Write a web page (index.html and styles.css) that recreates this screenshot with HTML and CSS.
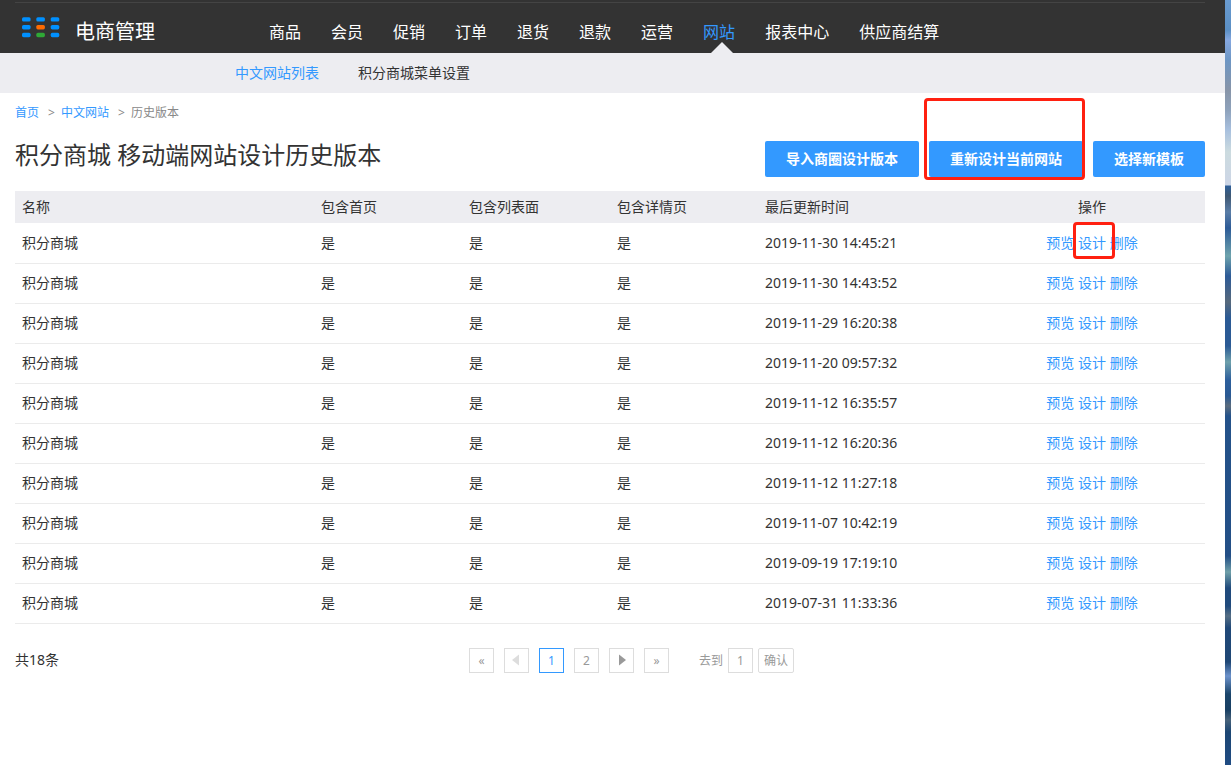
FILE: index.html
```html
<!DOCTYPE html>
<html lang="zh-CN">
<head>
  <meta charset="UTF-8">
  <title>历史版本 - 电商管理</title>
  <link rel="stylesheet" href="styles.css">
</head>
<body>
  <div class="page">
    <header class="header">
      <div class="header-inner">
        <div class="brand">
          <svg class="logo" width="38" height="22" viewBox="0 0 38 22" aria-hidden="true">
            <g fill="#0090ff">
              <rect x="0" y="0.2" width="8.6" height="4.4" rx="1.6"/>
              <rect x="14.3" y="0.2" width="8.6" height="4.4" rx="1.6"/>
              <rect x="28.7" y="0.2" width="8.6" height="4.4" rx="1.6"/>
              <rect x="0" y="8" width="8.6" height="4.4" rx="1.6"/>
              <rect x="28.7" y="8" width="8.6" height="4.4" rx="1.6"/>
              <rect x="0" y="15.8" width="8.6" height="4.4" rx="1.6"/>
              <rect x="28.7" y="15.8" width="8.6" height="4.4" rx="1.6"/>
            </g>
            <rect x="14.3" y="8" width="8.6" height="4.4" rx="1.6" fill="#ff6a00"/>
            <rect x="14.3" y="15.8" width="8.6" height="4.4" rx="1.6" fill="#2fa836"/>
          </svg>
          <span class="brand-name">电商管理</span>
        </div>
        <nav class="nav">
          <a href="#">商品</a>
          <a href="#">会员</a>
          <a href="#">促销</a>
          <a href="#">订单</a>
          <a href="#">退货</a>
          <a href="#">退款</a>
          <a href="#">运营</a>
          <a href="#" class="active">网站</a>
          <a href="#">报表中心</a>
          <a href="#">供应商结算</a>
        </nav>
      </div>
    </header>

    <nav class="subnav">
      <a href="#" class="active">中文网站列表</a>
      <a href="#">积分商城菜单设置</a>
    </nav>

    <main class="content">
      <div class="breadcrumb">
        <a href="#">首页</a>
        <span class="sep">&gt;</span>
        <a href="#">中文网站</a>
        <span class="sep">&gt;</span>
        <span>历史版本</span>
      </div>

      <div class="title-bar">
        <h1>积分商城 移动端网站设计历史版本</h1>
        <div class="actions">
          <button type="button" class="btn">导入商圈设计版本</button>
          <div class="marked marked-btn">
            <button type="button" class="btn">重新设计当前网站</button>
          </div>
          <button type="button" class="btn">选择新模板</button>
        </div>
      </div>

      <table class="list">
        <colgroup>
          <col>
          <col class="col-flag">
          <col class="col-flag">
          <col class="col-flag">
          <col class="col-time">
          <col class="col-ops">
        </colgroup>
        <thead>
          <tr>
            <th>名称</th>
            <th>包含首页</th>
            <th>包含列表面</th>
            <th>包含详情页</th>
            <th>最后更新时间</th>
            <th class="ops">操作</th>
          </tr>
        </thead>
        <tbody>
          <tr>
            <td>积分商城</td><td>是</td><td>是</td><td>是</td><td>2019-11-30 14:45:21</td>
            <td class="ops"><a href="#">预览</a> <span class="marked marked-link"><a href="#">设计</a></span> <a href="#">删除</a></td>
          </tr>
          <tr>
            <td>积分商城</td><td>是</td><td>是</td><td>是</td><td>2019-11-30 14:43:52</td>
            <td class="ops"><a href="#">预览</a> <a href="#">设计</a> <a href="#">删除</a></td>
          </tr>
          <tr>
            <td>积分商城</td><td>是</td><td>是</td><td>是</td><td>2019-11-29 16:20:38</td>
            <td class="ops"><a href="#">预览</a> <a href="#">设计</a> <a href="#">删除</a></td>
          </tr>
          <tr>
            <td>积分商城</td><td>是</td><td>是</td><td>是</td><td>2019-11-20 09:57:32</td>
            <td class="ops"><a href="#">预览</a> <a href="#">设计</a> <a href="#">删除</a></td>
          </tr>
          <tr>
            <td>积分商城</td><td>是</td><td>是</td><td>是</td><td>2019-11-12 16:35:57</td>
            <td class="ops"><a href="#">预览</a> <a href="#">设计</a> <a href="#">删除</a></td>
          </tr>
          <tr>
            <td>积分商城</td><td>是</td><td>是</td><td>是</td><td>2019-11-12 16:20:36</td>
            <td class="ops"><a href="#">预览</a> <a href="#">设计</a> <a href="#">删除</a></td>
          </tr>
          <tr>
            <td>积分商城</td><td>是</td><td>是</td><td>是</td><td>2019-11-12 11:27:18</td>
            <td class="ops"><a href="#">预览</a> <a href="#">设计</a> <a href="#">删除</a></td>
          </tr>
          <tr>
            <td>积分商城</td><td>是</td><td>是</td><td>是</td><td>2019-11-07 10:42:19</td>
            <td class="ops"><a href="#">预览</a> <a href="#">设计</a> <a href="#">删除</a></td>
          </tr>
          <tr>
            <td>积分商城</td><td>是</td><td>是</td><td>是</td><td>2019-09-19 17:19:10</td>
            <td class="ops"><a href="#">预览</a> <a href="#">设计</a> <a href="#">删除</a></td>
          </tr>
          <tr>
            <td>积分商城</td><td>是</td><td>是</td><td>是</td><td>2019-07-31 11:33:36</td>
            <td class="ops"><a href="#">预览</a> <a href="#">设计</a> <a href="#">删除</a></td>
          </tr>
        </tbody>
      </table>

      <div class="footer-bar">
        <div class="total">共18条</div>
        <div class="pager">
          <a href="#" aria-label="第一页">«</a>
          <a href="#" class="disabled" aria-label="上一页">
            <svg width="9" height="13" viewBox="0 0 9 13"><path d="M7 0.5v11L0 6z" fill="currentColor"/></svg>
          </a>
          <a href="#" class="current">1</a>
          <a href="#">2</a>
          <a href="#" aria-label="下一页">
            <svg width="9" height="13" viewBox="0 0 9 13"><path d="M2 0.5v11L9 6z" fill="currentColor"/></svg>
          </a>
          <a href="#" aria-label="最后一页">»</a>
        </div>
        <form class="goto">
          <label for="pageNo">去到</label>
          <input type="text" id="pageNo" value="1">
          <button type="button">确认</button>
        </form>
      </div>
    </main>
  </div>
  <!-- desktop showing beside the window -->
  <div class="desktop-edge"></div>
</body>
</html>
```

FILE: styles.css
```css
* {
  box-sizing: border-box;
}

body {
  margin: 0;
  min-height: 100vh;
  display: flex;
  font-family: "Noto Sans", "Noto Sans CJK SC", sans-serif;
  font-size: 14px;
  line-height: 20px;
  color: #333;
  background: #fff;
}

a {
  color: #3399ff;
  text-decoration: none;
}

.page {
  flex: 1;
}

.desktop-edge {
  width: 6px;
  background: linear-gradient(
    #6a9bd0 0, #5b8fc4 30px, #86a8e0 40px, #6d96c4 60px, #8794a8 90px,
    #8ea2bb 110px, #a8c0de 130px, #ccdbdf 152px, #ccd5e6 185px,
    #2e5f98 186px, #3f5873 196px, #5a7da6 212px, #2d5b97 228px,
    #6ea3ad 256px, #2d5b97 276px, #57697c 302px, #2b5a95 318px,
    #2b5a95 346px, #6ea0ab 362px, #2d5f9c 380px, #2a5993 396px,
    #5b6c7d 406px, #24528a 416px, #234f86 556px, #6f9fa8 572px,
    #204a7c 588px, #204a7c 606px, #556e84 616px, #204878 628px,
    #1f4775 662px, #6c92cb 676px, #1b456b 694px, #183f63 710px,
    #47627a 720px, #1c4673 732px, #204c83 765px
  );
}

/* header */
.header {
  height: 53px;
  padding: 2px 20px 0 15px;
  background: #333;
}

.header-inner {
  display: flex;
  height: 51px;
  border-top: 1px solid #444;
}

.brand {
  display: flex;
  gap: 15px;
  width: 254px;
  padding-left: 7px;
}

.logo {
  margin-top: 14px;
}

.brand-name {
  font-size: 20px;
  line-height: 58px;
  color: #fff;
}

.nav {
  display: flex;
  gap: 30px;
  font-size: 16px;
  line-height: 58px;
}

.nav a {
  position: relative;
  height: 50px;
  color: #fff;
  white-space: nowrap;
}

.nav a.active {
  color: #3399ff;
}

.nav a.active::after {
  content: "";
  position: absolute;
  left: 8px;
  bottom: 0;
  border: 11px solid transparent;
  border-top: 0;
  border-bottom-color: #ededf1;
}

.subnav {
  display: flex;
  gap: 39px;
  padding-left: 235px;
  line-height: 40px;
  background: #ededf1;
}

.subnav a {
  color: #333;
}

.subnav a.active {
  color: #3399ff;
}

/* content */
.content {
  padding: 10px 20px 0 15px;
}

.breadcrumb {
  display: flex;
  font-size: 12px;
  color: #888;
}

.breadcrumb .sep {
  width: 22px;
  padding-left: 9px;
}

.title-bar {
  display: flex;
  justify-content: space-between;
  margin: 18px 0 14px;
}

.title-bar h1 {
  margin: 0;
  font-size: 24px;
  font-weight: normal;
  line-height: 28px;
}

.actions {
  display: flex;
  gap: 10px;
}

.btn {
  height: 36px;
  padding: 0 21px;
  border: 0;
  border-radius: 2px;
  background: #3399ff;
  color: #fff;
  font: bold 14px/36px "Noto Sans", "Noto Sans CJK SC", sans-serif;
  cursor: pointer;
}

.marked {
  position: relative;
}

.marked::after {
  content: "";
  position: absolute;
  border: 3px solid #ff2010;
  border-radius: 4px;
  pointer-events: none;
}

.marked-btn::after {
  inset: -43px -2px -3px -5px;
}

.marked-link::after {
  inset: -11px -9px -7px -5px;
}

.list {
  width: 100%;
  table-layout: fixed;
  border-collapse: collapse;
}

.col-flag {
  width: 148px;
}

.col-time {
  width: 221px;
}

.col-ops {
  width: 226px;
}

.list th,
.list td {
  padding: 0 7px;
  text-align: left;
  font-weight: normal;
}

.list th {
  height: 32px;
  background: #ededf1;
}

.list td {
  height: 40px;
  border-bottom: 1px solid #ebebeb;
}

.list .ops {
  text-align: center;
}

/* pager */
.footer-bar {
  display: flex;
  align-items: center;
  margin-top: 24px;
}

.total {
  width: 454px;
}

.pager {
  display: flex;
  gap: 10px;
}

.pager a,
.goto input,
.goto button {
  height: 25px;
  border: 1px solid #ddd;
  background: #fff;
  color: #999;
  font: 12px/23px "Noto Sans", "Noto Sans CJK SC", sans-serif;
}

.pager a {
  display: flex;
  justify-content: center;
  align-items: center;
  width: 25px;
}

.pager a.current {
  border-color: #3399ff;
  color: #3399ff;
}

.pager a.disabled {
  color: #ddd;
}

.goto {
  display: flex;
  gap: 5px;
  margin-left: 30px;
  font-size: 12px;
  line-height: 25px;
  color: #999;
}

.goto input {
  width: 25px;
  padding: 0;
  text-align: center;
}

.goto button {
  width: 36px;
  padding: 0;
  border-radius: 2px;
}
```
